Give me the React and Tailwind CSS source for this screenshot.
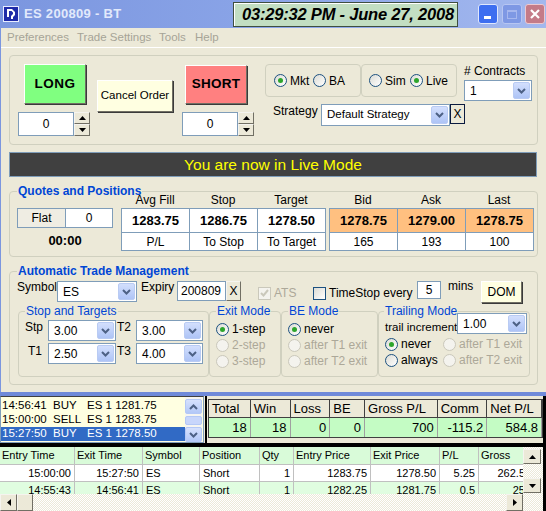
import React from 'react';

const Chevron = ({ up }) => (
  <svg width="9" height="6" viewBox="0 0 9 6">
    <path
      d={up ? 'M1 5l3.5-3.5L8 5' : 'M1 1l3.5 3.5L8 1'}
      fill="none"
      stroke="#4d6185"
      strokeWidth="2"
    />
  </svg>
);

const Tri = ({ dir }) => {
  let pts = {
    up: '0,4 3.5,0 7,4',
    down: '0,0 3.5,4 7,0',
    left: '4,0 0,3.5 4,7',
    right: '0,0 4,3.5 0,7',
  }[dir];
  let w = dir === 'up' || dir === 'down' ? 7 : 4;
  let h = dir === 'up' || dir === 'down' ? 4 : 7;
  return (
    <svg width={w} height={h} viewBox={`0 0 ${w} ${h}`}>
      <polygon points={pts} fill="#000" />
    </svg>
  );
};

const Combo = ({ value, className = '' }) => (
  <div className={`flex items-stretch bg-white border border-[#7f9db9] ${className}`}>
    <span className="flex-1 flex items-center pl-[5px] whitespace-nowrap overflow-hidden">{value}</span>
    <span className="w-[17px] m-[1px] rounded-[2px] border border-[#b9cbf3] bg-linear-to-b from-[#d3dffd] to-[#aec4f6] flex items-center justify-center">
      <Chevron />
    </span>
  </div>
);

const Radio = ({ label, checked, disabled, className = '' }) => (
  <div className={`flex items-center h-[16px] ${className}`}>
    <span
      className={`w-[13px] h-[13px] rounded-full border flex items-center justify-center shrink-0 ${
        disabled ? 'border-[#cac8bb] bg-[#f4f3ee]' : 'border-[#1c5180] bg-linear-to-br from-[#dcdcd5] to-white'
      }`}
    >
      {checked && <span className="w-[5px] h-[5px] rounded-full bg-[#2ca52c]" />}
    </span>
    <span className={`ml-[3px] whitespace-nowrap ${disabled ? 'text-[#aca899]' : 'text-black'}`}>{label}</span>
  </div>
);

const Raised = ({ children, className = '' }) => (
  <div
    className={`flex items-center justify-center border border-t-white border-l-white border-r-[#716f64] border-b-[#716f64] shadow-[1px_1px_0_#3a3a3a] ${className}`}
  >
    {children}
  </div>
);

const ClassicBtn = ({ dir, className = '' }) => (
  <div
    className={`flex items-center justify-center bg-[#ece9d8] border border-t-[#f5f4ef] border-l-[#f5f4ef] border-r-[#716f64] border-b-[#716f64] ${className}`}
  >
    <Tri dir={dir} />
  </div>
);

const Spin = ({ value }) => (
  <div className="flex h-[24px]">
    <div className="w-[56px] bg-white border border-[#7f9db9] flex items-center justify-center text-[12px]">
      {value}
    </div>
    <div className="w-[16px] flex flex-col">
      <ClassicBtn dir="up" className="h-[12px]" />
      <ClassicBtn dir="down" className="h-[12px]" />
    </div>
  </div>
);

const XpScrollBtn = ({ up }) => (
  <div className="h-[15px] rounded-[2px] border border-[#b4c8f6] bg-linear-to-b from-[#d6e1fd] to-[#b3c8f7] flex items-center justify-center">
    <Chevron up={up} />
  </div>
);

const pattern = 'bg-[repeating-conic-gradient(#ece9d8_0_25%,#ffffff_0_50%)] bg-[length:2px_2px]';

let trades = [
  ['14:56:41', 'BUY', 'ES 1 1281.75'],
  ['15:00:00', 'SELL', 'ES 1 1283.75'],
  ['15:27:50', 'BUY', 'ES 1 1278.50'],
];

let stats = [
  ['Total', '18', 'w-[42px]'],
  ['Win', '18', 'w-[40px]'],
  ['Loss', '0', 'w-[40px]'],
  ['BE', '0', 'w-[35px]'],
  ['Gross P/L', '700', 'w-[73px]'],
  ['Comm', '-115.2', 'w-[50px]'],
  ['Net P/L', '584.8', 'w-[55px]'],
];

let cols = [
  ['Entry Time', 'w-[75px]', 'text-right'],
  ['Exit Time', 'w-[68px]', 'text-right'],
  ['Symbol', 'w-[57px]', 'text-left'],
  ['Position', 'w-[60px]', 'text-left'],
  ['Qty', 'w-[34px]', 'text-right'],
  ['Entry Price', 'w-[77px]', 'text-right'],
  ['Exit Price', 'w-[69px]', 'text-right'],
  ['P/L', 'w-[39px]', 'text-right'],
  ['Gross', 'w-[50px]', 'text-right'],
];

let rows = [
  ['15:00:00', '15:27:50', 'ES', 'Short', '1', '1283.75', '1278.50', '5.25', '262.5'],
  ['14:55:43', '14:56:41', 'ES', 'Short', '1', '1282.25', '1281.75', '0.5', '25'],
];

const SmallX = () => (
  <div className="mt-[3px] w-[15px] h-[20px] bg-[#ece9d8] border border-t-[#f5f4ef] border-l-[#f5f4ef] border-r-[#716f64] border-b-[#716f64] flex items-center justify-center">
    X
  </div>
);

const App = () => {
  return (
    <div className="w-[546px] h-[511px] overflow-hidden bg-[#ece9d8] text-[11px] text-black font-['Liberation_Sans',Arial,sans-serif]">
      {/* title bar */}
      <div className="h-[28px] flex items-center bg-linear-to-r from-[#7b96df] via-[#8ba5e8] to-[#a3b8ee]">
        <svg className="ml-[3px] shrink-0" width="16" height="16" viewBox="0 0 16 16">
          <rect x="0.5" y="0.5" width="15" height="15" fill="#1e2aa8" stroke="#e8ecff" />
          <path d="M4 3h5l3 3v3l-2 2v2H8v-3l2-2V6.5L8.5 5H6v6H4z" fill="#fff" />
        </svg>
        <span className="ml-[5px] w-[209px] font-bold text-[13px] text-[#e2e9fb] tracking-[0.3px]">ES 200809 - BT</span>
        <div className="w-[225px] h-[25px] bg-[#c2dec2] border border-[#3f4f3f] shadow-[inset_1px_1px_0_#ffffff] flex items-center pl-[8px]">
          <span className="italic font-bold text-[16.5px] tracking-[-0.2px]">03:29:32 PM - June 27, 2008</span>
        </div>
        <div className="ml-[20px] w-[20px] h-[20px] rounded-[3px] bg-[#3d6ef0] border border-[#dfe7fd] flex items-end pl-[5px] pb-[4px]">
          <span className="w-[7px] h-[3px] bg-white" />
        </div>
        <div className="ml-[4px] w-[20px] h-[20px] rounded-[3px] bg-[#7e98e4] border border-[#b7c6f2] flex items-center justify-center">
          <span className="w-[10px] h-[9px] border border-[#a6b7ee] border-t-[2px]" />
        </div>
        <div className="ml-[3px] w-[20px] h-[20px] rounded-[3px] bg-[#c47b88] border border-[#ecc9d0] flex items-center justify-center">
          <svg width="12" height="12" viewBox="0 0 12 12">
            <path d="M2 2l8 8M10 2l-8 8" stroke="#fff" strokeWidth="2.2" />
          </svg>
        </div>
      </div>

      <div className="border-l border-[#7b96df]">
        {/* menu */}
        <div className="h-[19px] flex items-center text-[#a6a497] text-[11.5px]">
          <span className="ml-[6px] w-[70px]">Preferences</span>
          <span className="w-[82px]">Trade Settings</span>
          <span className="w-[36px]">Tools</span>
          <span>Help</span>
        </div>
        <div className="h-[1px] bg-white" />

        {/* order box */}
        <div className="ml-[8px] mt-[7px] w-[529px] h-[90px] border border-[#d0d0bf] rounded-[4px] flex items-start">
          <div className="ml-[8px] w-[72px] flex flex-col">
            <Raised className="ml-[6px] mt-[8px] w-[62px] h-[40px] bg-[#80ff80] font-bold text-[13.5px] tracking-[0.5px]">
              LONG
            </Raised>
            <div className="mt-[8px]">
              <Spin value="0" />
            </div>
          </div>
          <Raised className="ml-[7px] mt-[24px] w-[76px] h-[32px] bg-[#ffffe1] text-[11.5px]">Cancel Order</Raised>
          <div className="ml-[9px] w-[72px] flex flex-col">
            <Raised className="ml-[3px] mt-[9px] w-[62px] h-[39px] bg-[#ff8080] font-bold text-[13.5px] tracking-[0.3px]">
              SHORT
            </Raised>
            <div className="mt-[8px]">
              <Spin value="0" />
            </div>
          </div>
          <div className="ml-[11px] mt-[8px] flex flex-col text-[12px]">
            <div className="flex items-start">
              <div className="w-[96px] h-[33px] border border-[#d0d0bf] rounded-[4px] flex items-center pl-[8px]">
                <Radio label="Mkt" checked className="w-[39px]" />
                <Radio label="BA" />
              </div>
              <div className="w-[96px] h-[33px] border border-[#d0d0bf] rounded-[4px] flex items-center pl-[7px]">
                <Radio label="Sim" className="w-[41px]" />
                <Radio label="Live" checked />
              </div>
              <div className="ml-[7px] flex flex-col">
                <span className="leading-[14px]"># Contracts</span>
                <Combo value="1" className="mt-[2px] w-[68px] h-[21px]" />
              </div>
            </div>
            <div className="mt-[3px] flex items-start">
              <span className="ml-[8px] w-[48px] leading-[14px]">Strategy</span>
              <Combo value="Default Strategy" className="w-[129px] h-[22px] text-[11.5px]" />
              <div className="w-[15px] h-[20px] border border-[#0a1a40] bg-[#ece9d8] flex items-center justify-center text-[12px]">
                X
              </div>
            </div>
          </div>
        </div>

        {/* live mode banner */}
        <div className="ml-[8px] mt-[7px] w-[528px] h-[25px] bg-[#404040] border border-[#7f9db9] flex items-center justify-center text-[#ffff00] text-[15.5px]">
          You are now in Live Mode
        </div>

        {/* quotes */}
        <fieldset className="ml-[8px] mt-[7px] w-[529px] h-[73px] border border-[#d0d0bf] rounded-[4px]">
          <legend className="ml-[7px] px-[1px] font-bold text-[12px] leading-[14px] text-[#0046d5]">
            Quotes and Positions
          </legend>
          <div className="flex items-start text-[12px]">
            <div className="ml-[7px] mt-[10px] w-[96px] flex flex-col">
              <div className="flex h-[20px] border border-[#7f9db9]">
                <span className="w-[48px] border-r border-[#7f9db9] bg-[#efede3] flex items-center justify-center">Flat</span>
                <span className="flex-1 bg-white flex items-center justify-center">0</span>
              </div>
              <span className="mt-[5px] text-center font-bold text-[13px] leading-[16px]">00:00</span>
            </div>
            <div className="ml-[8px] -mt-[6px] flex flex-col">
              <div className="flex h-[16px] items-center">
                <span className="w-[68px] text-center">Avg Fill</span>
                <span className="w-[68px] text-center">Stop</span>
                <span className="w-[68px] text-center">Target</span>
                <span className="w-[4px]" />
                <span className="w-[68px] text-center">Bid</span>
                <span className="w-[68px] text-center">Ask</span>
                <span className="w-[68px] text-center">Last</span>
              </div>
              <div className="flex gap-[3px]">
                <div className="flex border-t border-l border-[#7f9db9]">
                  {[
                    ['1283.75', 'P/L'],
                    ['1286.75', 'To Stop'],
                    ['1278.50', 'To Target'],
                  ].map(([a, b]) => (
                    <div key={b} className="w-[68px] flex flex-col border-r border-[#7f9db9]">
                      <span className="h-[24px] bg-white border-b border-[#7f9db9] flex items-center justify-center font-bold text-[13px]">
                        {a}
                      </span>
                      <span className="h-[18px] bg-white border-b border-[#7f9db9] flex items-center justify-center">{b}</span>
                    </div>
                  ))}
                </div>
                <div className="flex border-t border-l border-[#7f9db9]">
                  {[
                    ['1278.75', '165'],
                    ['1279.00', '193'],
                    ['1278.75', '100'],
                  ].map(([a, b]) => (
                    <div key={b} className="w-[68px] flex flex-col border-r border-[#7f9db9]">
                      <span className="h-[24px] bg-[#ffc080] border-b border-[#7f9db9] flex items-center justify-center font-bold text-[13px]">
                        {a}
                      </span>
                      <span className="h-[18px] bg-white border-b border-[#7f9db9] flex items-center justify-center">{b}</span>
                    </div>
                  ))}
                </div>
              </div>
            </div>
          </div>
        </fieldset>

        {/* automatic trade management */}
        <fieldset className="ml-[8px] mt-[7px] w-[529px] h-[121px] border border-[#d0d0bf] rounded-[4px] text-[12px]">
          <legend className="ml-[7px] px-[1px] font-bold text-[12px] leading-[14px] text-[#0046d5]">
            Automatic Trade Management
          </legend>
          <div className="flex items-start h-[26px]">
            <span className="ml-[7px] mt-[2px] w-[40px] leading-[14px]">Symbol</span>
            <Combo value="ES" className="mt-[3px] w-[80px] h-[21px]" />
            <span className="ml-[4px] mt-[2px] w-[36px] leading-[14px]">Expiry</span>
            <div className="mt-[3px] w-[49px] h-[20px] bg-white border border-[#7f9db9] flex items-center pl-[3px]">200809</div>
            <SmallX />
            <div className="ml-[17px] mt-[6px] w-[55px] flex items-center">
              <span className="w-[13px] h-[13px] border border-[#cac8bb] bg-[#f4f3ee] flex items-center justify-center">
                <svg width="9" height="8" viewBox="0 0 9 8">
                  <path d="M1 4l2.5 2.5L8 1" fill="none" stroke="#cac8bb" strokeWidth="2" />
                </svg>
              </span>
              <span className="ml-[3px] text-[#aca899]">ATS</span>
            </div>
            <div className="mt-[6px] w-[104px] flex items-center">
              <span className="w-[13px] h-[13px] border border-[#1c5180] bg-linear-to-br from-[#dcdcd5] to-white" />
              <span className="ml-[3px]">TimeStop every</span>
            </div>
            <div className="mt-[3px] w-[24px] h-[18px] bg-white border border-[#7f9db9] flex items-center justify-center">5</div>
            <span className="ml-[7px] mt-[1px] w-[33px] leading-[14px]">mins</span>
            <Raised className="mt-[3px] w-[41px] h-[22px] bg-[#ffffe1]">DOM</Raised>
          </div>
          <div className="ml-[8px] flex">
            <fieldset className="w-[191px] h-[73px] border border-[#d0d0bf] rounded-[4px]">
              <legend className="ml-[6px] px-[1px] leading-[14px] text-[#0046d5]">Stop and Targets</legend>
              <div className="mt-[2px] pl-[6px] flex items-start">
                <span className="w-[23px] leading-[14px]">Stp</span>
                <Combo value="3.00" className="w-[68px] h-[21px]" />
                <span className="w-[20px] pl-[1px] leading-[14px]">T2</span>
                <Combo value="3.00" className="w-[67px] h-[21px]" />
              </div>
              <div className="mt-[2px] pl-[6px] flex items-start">
                <span className="w-[23px] pl-[3px] mt-[1px] leading-[14px]">T1</span>
                <Combo value="2.50" className="w-[68px] h-[21px]" />
                <span className="w-[20px] pl-[1px] mt-[1px] leading-[14px]">T3</span>
                <Combo value="4.00" className="w-[67px] h-[21px]" />
              </div>
            </fieldset>
            <fieldset className="w-[72px] h-[73px] border border-[#d0d0bf] rounded-[4px]">
              <legend className="ml-[6px] px-[1px] leading-[14px] text-[#0046d5]">Exit Mode</legend>
              <div className="pt-[3px] pl-[6px]">
                <Radio label="1-step" checked />
                <Radio label="2-step" disabled />
                <Radio label="3-step" disabled />
              </div>
            </fieldset>
            <fieldset className="w-[97px] h-[73px] border border-[#d0d0bf] rounded-[4px]">
              <legend className="ml-[6px] px-[1px] leading-[14px] text-[#0046d5]">BE Mode</legend>
              <div className="pt-[3px] pl-[6px]">
                <Radio label="never" checked />
                <Radio label="after T1 exit" disabled />
                <Radio label="after T2 exit" disabled />
              </div>
            </fieldset>
            <fieldset className="w-[152px] h-[73px] border border-[#d0d0bf] rounded-[4px]">
              <legend className="ml-[5px] px-[1px] leading-[14px] text-[#0046d5]">Trailing Mode</legend>
              <div className="-mt-[5px] flex items-start">
                <span className="ml-[6px] mt-[7px] w-[72px] leading-[14px] whitespace-nowrap text-[11.5px]">
                  trail increment
                </span>
                <Combo value="1.00" className="w-[70px] h-[21px]" />
              </div>
              <div className="mt-[2px] pl-[6px] grid grid-cols-[58px_1fr]">
                <Radio label="never" checked />
                <Radio label="after T1 exit" disabled />
                <Radio label="always" />
                <Radio label="after T2 exit" disabled />
              </div>
            </fieldset>
          </div>
        </fieldset>
        <div className="h-[7px]" />
      </div>
      <div className="h-[4px] bg-[#6f8ad9]" />

      {/* bottom pane */}
      <div className="flex h-[47px]">
        <div className="w-[204px] border border-[#7f9db9] border-t-[#404040] bg-[#ffffe1] flex">
          <div className="flex-1 pt-[2px] text-[11.5px]">
            {trades.map(([t, s, r], i) => (
              <div
                key={t}
                className={`h-[14px] flex items-center ${i === 2 ? 'bg-[#316ac5] text-white' : ''}`}
              >
                <span className="pl-[1px] w-[52px]">{t}</span>
                <span className="w-[34px]">{s}</span>
                <span>{r}</span>
              </div>
            ))}
          </div>
          <div className="w-[17px] mr-[1px] pt-[2px] flex flex-col bg-[#f6f5f0]">
            <XpScrollBtn up />
            <div className="mt-[2px] h-[9px] rounded-[2px] border border-[#b4c8f6] bg-[#c8d6fb]" />
            <div className="mt-[2px]">
              <XpScrollBtn />
            </div>
          </div>
        </div>
        <div className="ml-[1px] w-[341px] border-l-2 border-r-[3px] border-black pl-[1px] pt-[3px]">
          <div className="flex flex-col border border-[#404040] w-[335px] text-[13px]">
            <div className="flex h-[18px] border-b border-[#404040] bg-[#ece9d8]">
              {stats.map(([h, v, w]) => (
                <span key={h} className={`${w} border-r border-[#404040] pl-[3px] flex items-center`}>
                  {h}
                </span>
              ))}
            </div>
            <div className="flex h-[19px] bg-[#c4fcc4]">
              {stats.map(([h, v, w]) => (
                <span key={h} className={`${w} border-r border-[#a0a0a0] pr-[3px] flex items-center justify-end`}>
                  {v}
                </span>
              ))}
            </div>
          </div>
        </div>
      </div>
      <div className="h-[4px] bg-black" />
      <div className="flex h-[64px]">
        <div className="w-[523px] flex flex-col">
          <div className="h-[47px] overflow-hidden bg-white">
            <div className="flex h-[18px] bg-[#d9fbd9] w-[529px]">
              {cols.map(([h, w]) => (
                <span key={h} className={`${w} shrink-0 border-r border-b border-[#c0c0c0] pl-[2px] flex items-center`}>
                  {h}
                </span>
              ))}
            </div>
            {rows.map((r, i) => (
              <div key={i} className={`flex h-[17px] w-[529px] ${i === 1 ? 'bg-[#e0fde0]' : 'bg-white'}`}>
                {r.map((v, j) => (
                  <span
                    key={j}
                    className={`${cols[j][1]} ${cols[j][2]} shrink-0 border-r border-b border-[#c0c0c0] px-[3px] leading-[16px] whitespace-nowrap`}
                  >
                    {v}
                  </span>
                ))}
              </div>
            ))}
          </div>
          <div className={`h-[17px] flex ${pattern}`}>
            <ClassicBtn dir="left" className="w-[17px]" />
            <div className="w-[16px] bg-[#ece9d8] border border-t-[#f5f4ef] border-l-[#f5f4ef] border-r-[#716f64] border-b-[#716f64]" />
            <div className="flex-1" />
            <ClassicBtn dir="right" className="w-[17px]" />
          </div>
        </div>
        <div className={`w-[20px] flex flex-col ${pattern}`}>
          <div className="h-[47px] flex flex-col pt-[2px]">
            <ClassicBtn dir="up" className="w-[18px] h-[15px]" />
            <div className="flex-1" />
            <ClassicBtn dir="down" className="w-[18px] h-[15px] mb-[1px]" />
          </div>
          <div className="h-[17px]" />
        </div>
        <div className="w-[3px] bg-black" />
      </div>
    </div>
  );
};

export default App;
